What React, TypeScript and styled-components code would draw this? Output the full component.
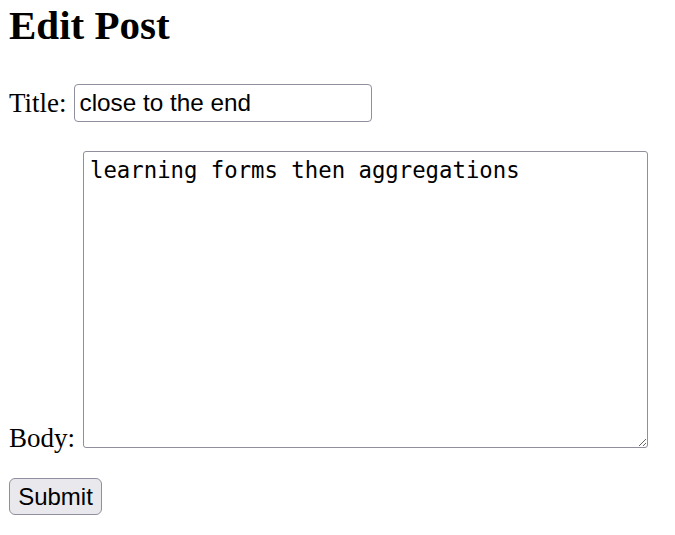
import React from "react";
import styled, { createGlobalStyle } from "styled-components";

const GlobalStyle = createGlobalStyle`
  html, body {
    margin: 0;
    padding: 0;
    background: #ffffff;
    color: #000000;
  }
  body {
    font-family: "Liberation Serif", "Times New Roman", serif;
  }
`;

const Page = styled.div`
  display: flex;
  flex-direction: column;
  align-items: flex-start;
  padding: 2px 9px 0 9px;
`;

const Heading = styled.h1`
  margin: 0;
  font-family: "Liberation Serif", "Times New Roman", serif;
  font-size: 41px;
  font-weight: 700;
  line-height: 47px;
`;

const Form = styled.form`
  display: flex;
  flex-direction: column;
  align-items: flex-start;
  margin: 0;
`;

const Row = styled.div<{ $gap: number; $top: number }>`
  display: flex;
  align-items: flex-end;
  gap: ${(p) => p.$gap}px;
  margin-top: ${(p) => p.$top}px;
`;

const Label = styled.label<{ $bottom?: number }>`
  font-family: "Liberation Serif", "Times New Roman", serif;
  font-size: 27px;
  line-height: 20px;
  margin-bottom: ${(p) => p.$bottom ?? 0}px;
`;

const TextInput = styled.input`
  box-sizing: border-box;
  width: 298px;
  height: 38px;
  margin: 0;
  padding: 0 5px;
  border: 1px solid #8f8f9d;
  border-radius: 4px;
  font-family: "Liberation Sans", Arial, sans-serif;
  font-size: 24.3px;
  color: #000;
  background: #fff;
  outline: none;
`;

const BodyArea = styled.textarea`
  box-sizing: border-box;
  width: 565px;
  height: 297px;
  margin: 0;
  padding: 5px 6px;
  border: 1px solid #8f8f9d;
  border-radius: 3px;
  font-family: "DejaVu Sans Mono", "Liberation Mono", monospace;
  font-size: 22.3px;
  line-height: 26px;
  color: #000;
  background: #fff;
  outline: none;
  resize: both;
`;

const SubmitButton = styled.button`
  box-sizing: border-box;
  margin-top: 30px;
  width: 93px;
  height: 37px;
  padding: 0;
  border: 1px solid #8f8f9d;
  border-radius: 6px;
  background: #e9e9ed;
  font-family: "Liberation Sans", Arial, sans-serif;
  font-size: 24px;
  color: #000;
`;

export default function App() {
  return (
    <>
      <GlobalStyle />
      <Page>
        <Heading>Edit Post</Heading>
        <Form onSubmit={(e) => e.preventDefault()}>
          <Row $gap={7} $top={35}>
            <Label htmlFor="title" $bottom={9}>
              Title:
            </Label>
            <TextInput id="title" type="text" defaultValue="close to the end" />
          </Row>
          <Row $gap={8} $top={29}>
            <Label htmlFor="body">Body:</Label>
            <BodyArea id="body" defaultValue="learning forms then aggregations" />
          </Row>
          <SubmitButton type="submit">Submit</SubmitButton>
        </Form>
      </Page>
    </>
  );
}
